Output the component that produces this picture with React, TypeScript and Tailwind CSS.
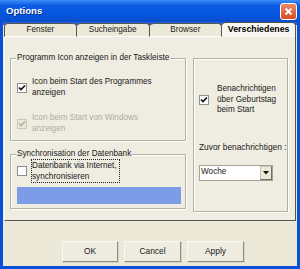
import React from 'react';

type CheckProps = {
  checked?: boolean;
  disabled?: boolean;
};

function Check({ checked, disabled }: CheckProps) {
  return (
    <div
      className={`w-[10px] h-[10px] shrink-0 border flex items-center justify-center ${
        disabled ? 'border-[#c9c7ba] bg-[#ece9d8]' : 'border-[#8e8f8f] bg-white'
      }`}
    >
      {checked && (
        <svg width="8" height="8" viewBox="0 0 8 8">
          <polyline
            points="1,3.5 3,5.5 7,1.5"
            fill="none"
            stroke={disabled ? '#b4b2a4' : '#111'}
            strokeWidth="1.7"
          />
        </svg>
      )}
    </div>
  );
}

function GroupBox({
  label,
  className,
  children,
}: {
  label?: string;
  className: string;
  children: React.ReactNode;
}) {
  return (
    <div
      className={`relative border border-[#b3b1a4] shadow-[1px_1px_0_#fff,inset_1px_1px_0_#fff] ${className}`}
    >
      {label && (
        <span className="absolute left-[5px] top-[-6px] px-[1px] bg-[#efece1] leading-[10px]">
          {label}
        </span>
      )}
      {children}
    </div>
  );
}

const tabs = ['Fenster', 'Sucheingabe', 'Browser', 'Verschiedenes'];

export default function App() {
  return (
    <div className="w-[300px] h-[269px] flex flex-col bg-[#0a4fd8] font-['Liberation_Sans',Arial,sans-serif] text-[8.2px] text-[#1a1a1a] overflow-hidden">
      {/* title bar */}
      <div className="h-[22px] shrink-0 flex items-center justify-between pl-[6px] pr-[3px] bg-[linear-gradient(to_bottom,#3f8ef7,#0c5be4_25%,#0655dd_70%,#0b4ccc)]">
        <span className="text-white font-bold text-[9.6px] [text-shadow:1px_1px_0_#0a2a80]">
          Options
        </span>
        <div className="w-[17px] h-[17px] rounded-[3px] border border-white bg-[linear-gradient(to_bottom,#ec8a68,#d94a22)] flex items-center justify-center">
          <svg width="9" height="9" viewBox="0 0 9 9">
            <path d="M1.5 1.5 L7.5 7.5 M7.5 1.5 L1.5 7.5" stroke="#fff" strokeWidth="1.8" />
          </svg>
        </div>
      </div>

      {/* body */}
      <div className="flex-1 mx-[3px] mb-[3px] flex flex-col bg-[#ece9d8]">
        <div className="h-[15px] shrink-0 flex px-[1px] bg-[linear-gradient(to_bottom,#2563d9_3px,#ece9d8_3px)]">
          {tabs.map((t, i) => {
            const active = i === 3;
            return (
              <div
                key={t}
                className={`flex items-center justify-center rounded-t-[4px] border-r border-t border-[#55544e] ${
                  i === 0 ? 'border-l' : ''
                } ${
                  active
                    ? 'w-[74px] bg-[#f7f6f1] font-bold text-[8.8px] text-black'
                    : 'w-[73px] mt-[1px] bg-[#ece9d8] border-b border-b-white'
                }`}
              >
                {t}
              </div>
            );
          })}
        </div>

        {/* tab panel */}
        <div className="h-[184px] shrink-0 mx-[1px] border-l border-white border-r border-r-[#55544e] border-b border-b-[#55544e] bg-[#efece1] flex gap-[7px] pl-[5px] pt-[21px]">
          <div className="w-[176px] flex flex-col gap-[13px]">
            <GroupBox label="Programm Icon anzeigen in der Taskleiste" className="h-[83px] pl-[6px] pt-[18px] flex flex-col gap-[15px]">
              <div className="flex items-center gap-[5px]">
                <Check checked />
                <div className="leading-[10.5px]">
                  Icon beim Start des Programmes
                  <br />
                  anzeigen
                </div>
              </div>
              <div className="flex items-center gap-[5px] text-[#b0ad9f]">
                <Check checked disabled />
                <div className="leading-[10.5px]">
                  Icon beim Start von Windows
                  <br />
                  anzeigen
                </div>
              </div>
            </GroupBox>

            <GroupBox label="Synchronisation der Datenbank" className="h-[55px] pl-[6px] pr-[4px] pt-[4px] flex flex-col">
              <div className="flex items-center gap-[4px]">
                <Check />
                <div className="leading-[11px] border border-dotted border-[#222] pr-[2px]">
                  Datenbank via Internet,
                  <br />
                  synchronisieren
                </div>
              </div>
              <div className="mt-[4px] h-[17px] w-[164px] bg-[#7c9ce8]" />
            </GroupBox>
          </div>

          <GroupBox className="w-[95px] h-[154px] pl-[5px] pt-[25px] flex flex-col">
            <div className="flex items-center gap-[8px]">
              <Check checked />
              <div className="leading-[10.5px]">
                Benachrichtigen
                <br />
                über Geburtstag
                <br />
                beim Start
              </div>
            </div>
            <div className="mt-[26px] leading-[10px] text-[8.4px]">Zuvor benachrichtigen :</div>
            <div className="mt-[13px] w-[74px] h-[16px] bg-white border border-[#a4a294] flex items-center justify-between">
              <span className="pl-[1px]">Woche</span>
              <div className="w-[12px] h-[14px] bg-[#ece9d8] border border-[#c9c6b6] border-r-[#716f64] border-b-[#716f64] flex items-center justify-center">
                <svg width="6" height="4" viewBox="0 0 6 4">
                  <path d="M0 0 H6 L3 3.5 Z" fill="#111" />
                </svg>
              </div>
            </div>
          </GroupBox>
        </div>

        {/* buttons */}
        <div className="flex gap-[6px] pl-[59px] pt-[20px]">
          {['OK', 'Cancel', 'Apply'].map((b, i) => (
            <button
              key={b}
              className={`${i === 0 ? 'w-[56px]' : 'w-[57px]'} h-[21px] flex items-center justify-center bg-[#eeebe0] border border-[#fbfaf6] border-r-[#8f8d80] border-b-[#8f8d80] shadow-[1px_1px_0_#d5d2c4] text-[8.4px]`}
            >
              {b}
            </button>
          ))}
        </div>
      </div>
    </div>
  );
}
